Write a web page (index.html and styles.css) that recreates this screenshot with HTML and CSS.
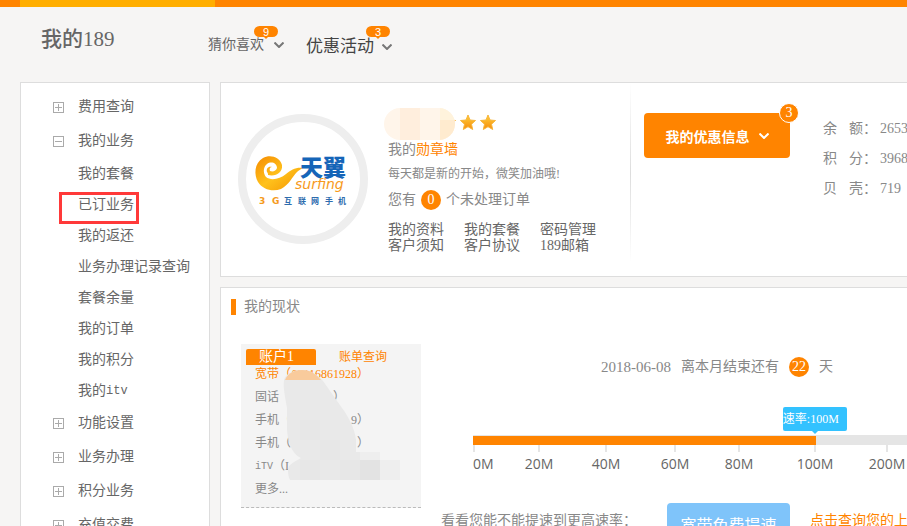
FILE: index.html
```
<!DOCTYPE html>
<html lang="zh-CN">
<head>
  <meta charset="UTF-8">
  <title>我的189</title>
  <link rel="stylesheet" href="styles.css">
</head>
<body>
  <div class="topbar"></div>

  <header class="header">
    <h1>我的189</h1>
    <nav class="nav">
      <a href="#" class="nav-item">猜你喜欢
        <svg class="chevron" width="10" height="6" viewBox="0 0 10 6"><path d="M.500 .500L5 5l4.500-4.500"/></svg>
        <span class="bubble">9</span>
      </a>
      <a href="#" class="nav-item nav-large">优惠活动
        <svg class="chevron" width="10" height="6" viewBox="0 0 10 6"><path d="M.500 .500L5 5l4.500-4.500"/></svg>
        <span class="bubble">3</span>
      </a>
    </nav>
  </header>

  <div class="layout">
    <aside class="sidebar">
      <ul class="menu">
        <li><a href="#" class="group"><i class="toggle plus"></i>费用查询</a></li>
        <li>
          <a href="#" class="group"><i class="toggle"></i>我的业务</a>
          <ul class="submenu">
            <li><a href="#">我的套餐</a></li>
            <li class="marked"><a href="#">已订业务</a></li>
            <li><a href="#">我的返还</a></li>
            <li><a href="#">业务办理记录查询</a></li>
            <li><a href="#">套餐余量</a></li>
            <li><a href="#">我的订单</a></li>
            <li><a href="#">我的积分</a></li>
            <li><a href="#">我的<span class="mono">itv</span></a></li>
          </ul>
        </li>
        <li><a href="#" class="group"><i class="toggle plus"></i>功能设置</a></li>
        <li><a href="#" class="group"><i class="toggle plus"></i>业务办理</a></li>
        <li><a href="#" class="group"><i class="toggle plus"></i>积分业务</a></li>
        <li><a href="#" class="group"><i class="toggle plus"></i>充值交费</a></li>
      </ul>
    </aside>

    <main class="main">
      <section class="card profile">
        <div class="avatar">
          <svg width="114" height="114" viewBox="0 0 114 114">
            <defs>
              <linearGradient id="gold" x1="0" y1="0" x2="1" y2="1">
                <stop offset="0" stop-color="#f58a00"/>
                <stop offset=".5" stop-color="#ffc21c"/>
                <stop offset="1" stop-color="#f39200"/>
              </linearGradient>
            </defs>
            <path fill="url(#gold)" d="M22 53C30 55 37 50 36 43C34 35 24 32 17 36C8 41 8 53 12 60C17 68 27 70 35 67C43 63 46 55 51 50C53 48 55 47 57 46C50 45 45 48 40 52C34 57 25 59 20 55C17 51 17 45 21 42C25 39 31 41 31 46C30 49 27 50 24 49C23 47 24 45 26 45C22 44 20 47 21 50C22 51 22 52 22 53Z"/>
            <text x="54" y="54" class="logo-name">天翼</text>
            <text x="49" y="67" class="logo-surfing">surfing</text>
            <text y="82" class="logo-3g" x="13 26">3G</text>
            <text y="82" class="logo-sub" x="38 52 65 79 92">互联网手机</text>
          </svg>
        </div>

        <div class="info">
          <div class="name-row">
            <svg width="112" height="32" viewBox="0 0 112 32">
              <defs>
                <linearGradient id="star" x1="0" y1="0" x2="0" y2="1">
                  <stop offset="0" stop-color="#ffd23a"/>
                  <stop offset="1" stop-color="#f58a0c"/>
                </linearGradient>
                <clipPath id="pill"><rect width="71" height="32" rx="16"/></clipPath>
                <path id="s" fill="url(#star)" stroke="#f7b53a" d="M0-7l2 5 5.500.500-4 3.700 1.200 5.300L0 4.700-4.700 7.500l1.200-5.300-4-3.700L-2-2z"/>
              </defs>
              <use href="#s" x="64" y="14"/>
              <use href="#s" x="84" y="14"/>
              <use href="#s" x="104" y="14"/>
              <g clip-path="url(#pill)">
                <rect width="71" height="32" fill="#fff5ea"/>
                <rect x="16" width="20" height="32" fill="#ffeedd"/>
                <rect x="56" width="15" height="12" fill="#fff3dc"/>
                <rect x="56" y="12" width="15" height="20" fill="#ffebcf"/>
              </g>
            </svg>
          </div>
          <p class="medal">我的<a href="#">勋章墙</a></p>
          <p class="greeting">每天都是新的开始，微笑加油哦!</p>
          <p class="orders">您有<span class="dot">0</span>个未处理订单</p>
          <div class="links">
            <a href="#">我的资料</a><a href="#">我的套餐</a><a href="#">密码管理</a>
            <a href="#">客户须知</a><a href="#">客户协议</a><a href="#">189邮箱</a>
          </div>
        </div>

        <div class="divider"></div>

        <div class="offers">
          <button type="button" class="offer-btn">我的优惠信息
            <svg class="chevron" width="10" height="6" viewBox="0 0 10 6"><path d="M.500 .500L5 5l4.500-4.500"/></svg>
            <span class="dot count">3</span>
          </button>
        </div>

        <dl class="stats">
          <dt><span>余</span><span>额：</span></dt><dd>2653</dd>
          <dt><span>积</span><span>分：</span></dt><dd>3968</dd>
          <dt><span>贝</span><span>壳：</span></dt><dd>719</dd>
        </dl>
      </section>

      <section class="card status">
        <h2>我的现状</h2>
        <div class="status-body">
          <div class="account">
            <div class="tabs">
              <a href="#" class="tab">账户1</a>
              <a href="#" class="bill">账单查询</a>
            </div>
            <ul class="numbers">
              <li class="active">宽带（<span class="num">07116861928</span>）</li>
              <li>固话（<span class="num short"></span>）</li>
              <li>手机（<span class="num">9</span>）</li>
              <li>手机（<span class="num start">1</span>）</li>
              <li><span class="mono">iTV</span>（I</li>
              <li><a href="#">更多...</a></li>
            </ul>
            <svg class="mask" width="120" height="112" viewBox="0 0 120 112">
              <path fill="#e9e9e9" d="M4 12C6 5 14 2 22 2C31 2 38 7 43 13L62 40C70 51 75 62 76 72V84H100V92H120V112H10C8 108 8 104 8 101C9 96 14 94 21 90C12 86 8 75 7 62V40C5 28 3 20 4 12Z"/>
              <path fill="#f9cb9c" d="M5 12C8 5 14 2 22 2C31 2 37 7 41 12Z"/>
              <path fill="#e7e7e7" d="M20 52h20v20H20zM40 72h20v20H40zM20 92h20v20H20zM60 92h20v20H60z"/>
              <path fill="#e3e3e3" d="M80 92h20v20H80z"/>
              <path fill="#eee" d="M80 84h20v8H80zM100 92h20v20h-20z"/>
            </svg>
          </div>

          <div class="usage">
            <div class="date-row">
              <span class="date">2018-06-08</span>
              <span>离本月结束还有</span>
              <span class="dot">22</span>
              <span>天</span>
            </div>

            <div class="meter">
              <div class="track">
                <div class="fill" style="width: 79%">
                  <span class="tip">速率:100M</span>
                </div>
              </div>
              <ol class="scale">
                <li>0M</li>
                <li>20M</li>
                <li>40M</li>
                <li>60M</li>
                <li>80M</li>
                <li>100M</li>
                <li>200M</li>
              </ol>
            </div>

            <div class="speed-row">
              <span>看看您能不能提速到更高速率：</span>
              <button type="button" class="speed-btn">宽带免费提速</button>
              <a href="#">点击查询您的上网速率</a>
            </div>
          </div>
        </div>
      </section>
    </main>
  </div>
</body>
</html>
```
FILE: styles.css
```
*, *::before, *::after {
  box-sizing: border-box;
  margin: 0;
  padding: 0;
}
html {
  height: 100%;
  overflow: hidden;
}
body {
  min-height: 100%;
  background: #f6f5f4;
  color: #888;
  font: 14px/18px "Liberation Serif", "Noto Sans CJK SC", sans-serif;
}
ul, ol {
  list-style: none;
}
a {
  color: #ff8400;
  text-decoration: none;
}
button {
  border: none;
  font-family: inherit;
  color: #fff;
  cursor: pointer;
}
.mono {
  font-family: "Liberation Mono", monospace;
  font-size: 12px;
}
.chevron {
  fill: none;
  stroke: #777;
  stroke-width: 2;
}
.dot {
  display: inline-block;
  width: 20px;
  height: 20px;
  border-radius: 50%;
  background: #ff8400;
  color: #fff;
  line-height: 20px;
  text-align: center;
}

/* header */
.topbar {
  height: 7px;
  background: linear-gradient(#ffae00, #ffae00) 20px 0 / 195px 7px no-repeat #ff8400;
}
.header {
  display: flex;
  height: 75px;
  padding-left: 41px;
}
h1 {
  width: 167px;
  color: #666;
  font-size: 21px;
  font-weight: 500;
  line-height: 64px;
}
.nav {
  display: flex;
  gap: 22px;
}
.nav-item {
  position: relative;
  display: flex;
  align-items: center;
  gap: 10px;
  height: 76px;
  color: #666;
}
.nav-large {
  gap: 8px;
  padding-top: 4px;
  color: #444;
  font-size: 17px;
}
.bubble {
  position: absolute;
  top: 19px;
  right: 6px;
  width: 24px;
  height: 11px;
  border-radius: 6px;
  background: #ff8400;
  color: #fff;
  font: 11px/12px "Liberation Sans", sans-serif;
  text-align: center;
}
.nav-large .bubble {
  right: 2px;
}
.bubble::after {
  content: "";
  position: absolute;
  top: 10px;
  left: 9px;
  border: 3px solid transparent;
  border-top-color: #ff8400;
  border-bottom: none;
}

.layout {
  display: flex;
  gap: 10px;
  padding-left: 20px;
}

/* sidebar */
.sidebar {
  flex: none;
  width: 190px;
  padding-top: 7px;
  border: 1px solid #ddd;
  background: #fff;
}
.menu a {
  display: flex;
  align-items: center;
  height: 31px;
  padding-left: 57px;
  color: #666;
}
.menu .group {
  height: 34px;
  padding-left: 32px;
}
.toggle {
  width: 11px;
  height: 11px;
  margin-right: 14px;
  border: 1px solid #aaa;
  background: linear-gradient(#aaa, #aaa) center / 7px 1px no-repeat;
}
.toggle.plus {
  background:
    linear-gradient(#aaa, #aaa) center / 7px 1px no-repeat,
    linear-gradient(#aaa, #aaa) center / 1px 7px no-repeat;
}
.marked {
  position: relative;
}
.marked::after {
  content: "";
  position: absolute;
  top: 3px;
  left: 38px;
  width: 80px;
  height: 32px;
  border: 3px solid #ff3939;
}

/* cards */
.main {
  flex: 1;
  min-width: 0;
}
.card {
  overflow: hidden;
  border: 1px solid #ddd;
  border-right: none;
  background: #fff;
}
.profile {
  display: flex;
  margin-bottom: 10px;
  padding-left: 17px;
}
.avatar {
  flex: none;
  width: 130px;
  height: 130px;
  margin-top: 31px;
  border: 8px solid #eee;
  border-radius: 50%;
}
.avatar svg {
  display: block;
}
.logo-name {
  fill: #1565b8;
  font: 900 23px "Noto Sans CJK SC", sans-serif;
}
.logo-surfing {
  fill: #f79a1c;
  font: italic 14px "DejaVu Sans", sans-serif;
}
.logo-3g {
  fill: #f59a1c;
  font: bold 9px "DejaVu Sans", sans-serif;
}
.logo-sub {
  fill: #2d6cae;
  font: bold 8px "Noto Sans CJK SC", sans-serif;
}
.info {
  flex: none;
  width: 242px;
  margin-left: 20px;
  padding: 25px 0 22px;
}
.name-row {
  height: 33px;
  margin-left: -4px;
}
.greeting {
  font-size: 12px;
  line-height: 30px;
}
.orders {
  display: flex;
  align-items: center;
  gap: 5px;
  height: 22px;
}
.links {
  display: grid;
  grid-template-columns: 76px 76px 76px;
  margin-top: 11px;
  line-height: 16px;
}
.links a {
  color: #666;
}
.divider {
  flex: none;
  width: 1px;
  height: 180px;
  background: linear-gradient(#fff, #ddd, #fff);
}
.offers {
  flex: none;
  padding: 30px 33px 0 13px;
}
.offer-btn {
  position: relative;
  display: flex;
  align-items: center;
  justify-content: center;
  gap: 9px;
  width: 146px;
  height: 45px;
  border-radius: 4px;
  background: #ff8400;
  font-size: 14px;
  font-weight: bold;
}
.offer-btn .chevron {
  stroke: #fff;
}
.count {
  position: absolute;
  top: -10px;
  right: -9px;
  border: 1px solid #fff;
  line-height: 17px;
  font-weight: normal;
}
.stats {
  flex: none;
  display: grid;
  grid-template-columns: 57px auto;
  align-content: start;
  padding-top: 31px;
  line-height: 30px;
}
.stats dt {
  display: flex;
  gap: 12px;
}

/* current status */
.status {
  padding-top: 10px;
}
h2 {
  display: flex;
  align-items: center;
  gap: 8px;
  margin-left: 10px;
  font-size: 14px;
  font-weight: normal;
}
h2::before {
  content: "";
  width: 5px;
  height: 16px;
  background: #ff8400;
}
.status-body {
  display: flex;
  margin-top: 28px;
  padding-left: 20px;
}
.account {
  position: relative;
  flex: none;
  align-self: flex-start;
  width: 180px;
  padding: 5px 5px 6px;
  border-bottom: 1px dashed #bbb;
  background: #f4f4f4;
}
.tabs {
  display: flex;
  gap: 23px;
  line-height: 16px;
}
.tab {
  width: 70px;
  height: 16px;
  padding-left: 13px;
  border-radius: 2px 2px 0 0;
  background: #ff8400;
  color: #fff;
}
.bill {
  font-size: 12px;
}
.numbers {
  margin-top: -2px;
  padding-left: 9px;
  font-size: 12px;
  line-height: 23px;
}
.numbers li {
  display: flex;
  height: 23px;
}
.numbers a {
  color: #888;
}
.numbers .active {
  color: #ff8400;
}
.numbers .mono {
  font-size: 10px;
}
.num {
  width: 66px;
  text-align: right;
}
.num.short {
  width: 42px;
}
.num.start {
  text-align: left;
}
.mask {
  position: absolute;
  top: 24px;
  left: 39px;
}

.usage {
  flex: 1;
  min-width: 0;
  padding-left: 20px;
  white-space: nowrap;
}
.date-row {
  display: flex;
  align-items: center;
  gap: 10px;
  height: 46px;
  padding-left: 160px;
}
.date {
  font-size: 15px;
}
.meter {
  margin: 45px 0 0 32px;
}
.track {
  height: 10px;
  border-top: 1px solid #e5e5e5;
  background: #e5e5e5;
}
.fill {
  position: relative;
  height: 9px;
  background: #ff8400;
}
.tip {
  position: absolute;
  right: -31px;
  bottom: 14px;
  width: 64px;
  height: 24px;
  border-radius: 2px;
  background: #33c2ff;
  color: #fff;
  font-size: 12px;
  line-height: 24px;
}
.tip::after {
  content: "";
  position: absolute;
  top: 24px;
  left: 29px;
  border: 3px solid transparent;
  border-top-color: #33c2ff;
  border-bottom: none;
}
.scale {
  display: grid;
  grid-template-columns: 65fr 67fr 69fr 64fr 76fr 72fr 21fr;
  color: #666;
  font: 14px/20px "Open Sans", sans-serif;
}
.scale li {
  display: flex;
  flex-direction: column;
  align-items: center;
  gap: 2px;
  width: 2px;
}
.scale li:first-child {
  align-items: flex-start;
}
.scale li::before {
  content: "";
  width: 2px;
  height: 7px;
  background: #e5e5e5;
}
.speed-row {
  display: flex;
  align-items: flex-start;
  margin-top: 29px;
  line-height: 36px;
}
.speed-row span {
  flex: none;
  width: 226px;
}
.speed-row a {
  margin-left: 20px;
}
.speed-btn {
  flex: none;
  width: 123px;
  height: 42px;
  border-radius: 4px;
  background: #7fc4fa;
  font-size: 16px;
}
```
